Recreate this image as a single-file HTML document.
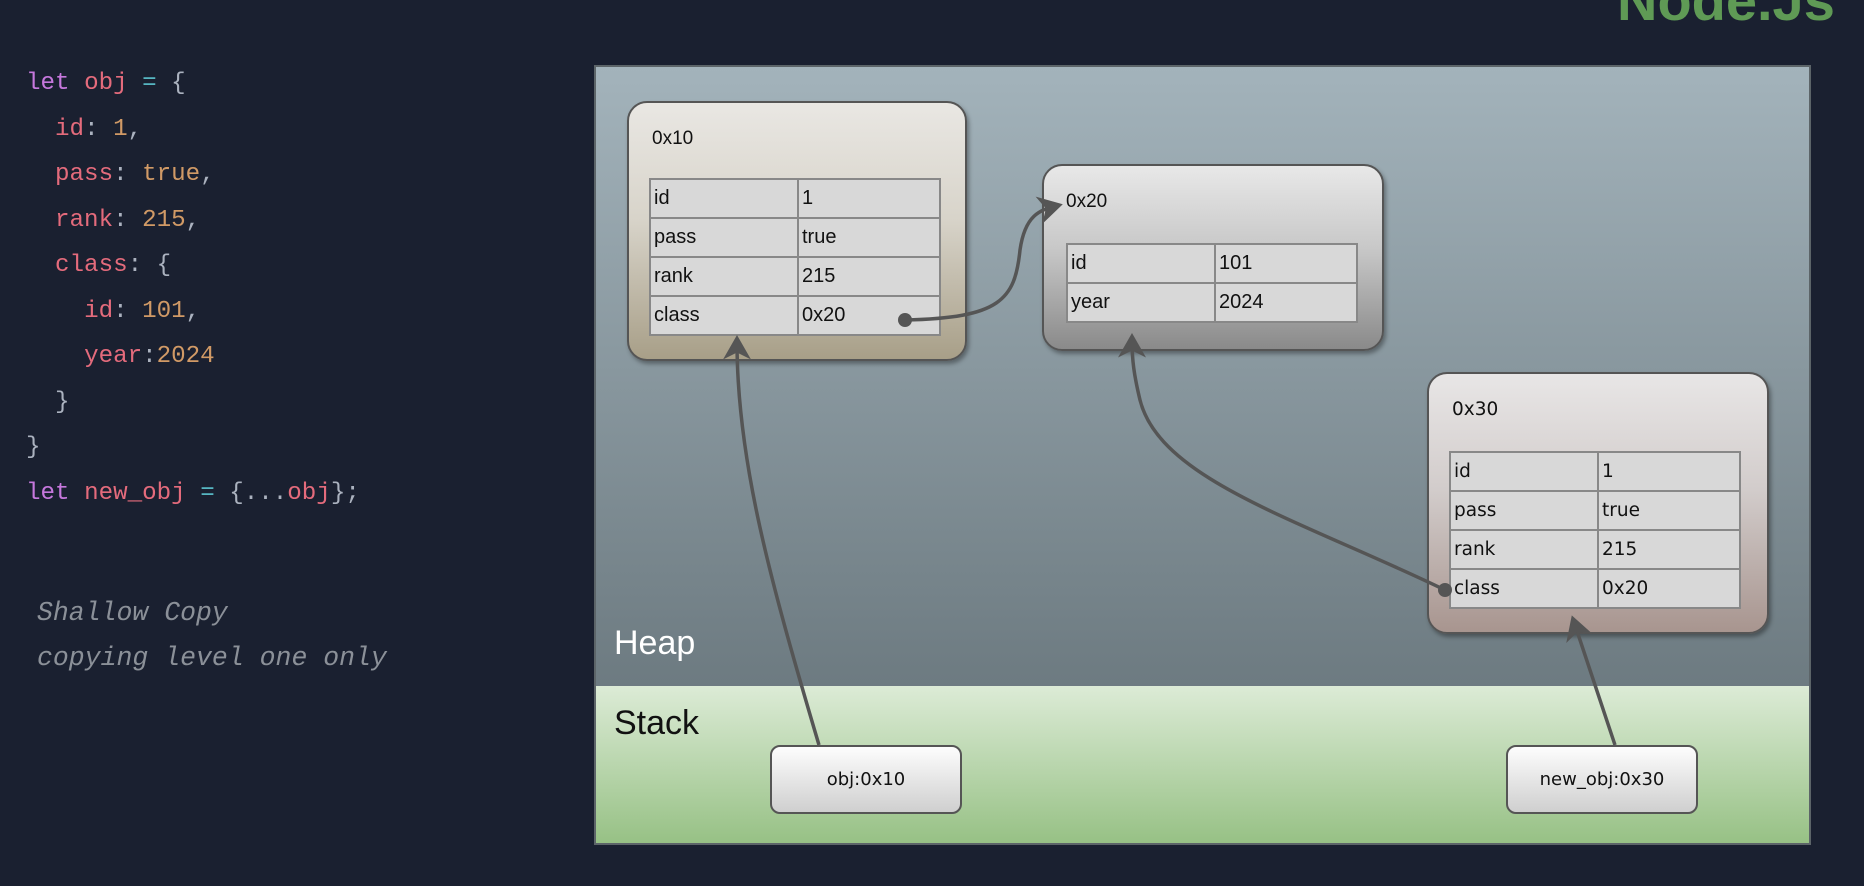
<!DOCTYPE html>
<html><head><meta charset="utf-8"><style>
html,body{margin:0;padding:0}
body{width:1864px;height:886px;background:#1a2030;position:relative;overflow:hidden;font-family:"Liberation Sans",sans-serif}
.code{position:absolute;left:26px;top:61px;font-family:"Liberation Mono",monospace;font-size:24.2px;line-height:45.5px;color:#abb2bf;white-space:pre}
.k{color:#c678dd}.v{color:#e46b7c}.o{color:#56b6c2}.n{color:#d19a66}
.cm{position:absolute;left:37px;font-family:"Liberation Mono",monospace;font-style:italic;font-size:26.5px;color:#8b9098;white-space:pre}
.logo{position:absolute;left:1617px;top:-32px;font-size:56px;font-weight:bold;color:#5f9a55;font-family:"Liberation Sans",sans-serif}
.panel{position:absolute;left:594px;top:65px;width:1213px;height:776px;border:2px solid #5c6468;background:linear-gradient(#a3b3bb,#5f6c72);}
.stack{position:absolute;left:0;top:619px;width:100%;height:157px;background:linear-gradient(#dcebd6,#97c185)}
.lbl{position:absolute;font-size:34px;color:#fff}
.box{position:absolute;border:2px solid #555;border-radius:20px;box-shadow:2px 3px 4px rgba(0,0,0,.35)}
.addr{position:absolute;font-size:19px;color:#111}
table{position:absolute;border-collapse:collapse;font-size:20px;color:#111}
td{border:2px solid #888;background:#d8d8d8;padding:0 3px;height:37px;vertical-align:middle}
.dj{font-family:"DejaVu Sans",sans-serif;font-size:18.5px}
.sb{position:absolute;top:745px;height:69px;border:2px solid #555;border-radius:10px;background:linear-gradient(#fdfdfd,#cfcfcf);font-family:"DejaVu Sans",sans-serif;font-size:18px;display:flex;align-items:center;justify-content:center;color:#111;box-sizing:border-box}
</style></head><body>
<div class="logo">Node.Js</div>
<div class="code"><span class="k">let</span> <span class="v">obj</span> <span class="o">=</span> {
  <span class="v">id</span>: <span class="n">1</span>,
  <span class="v">pass</span>: <span class="n">true</span>,
  <span class="v">rank</span>: <span class="n">215</span>,
  <span class="v">class</span>: {
    <span class="v">id</span>: <span class="n">101</span>,
    <span class="v">year</span>:<span class="n">2024</span>
  }
}
<span class="k">let</span> <span class="v">new_obj</span> <span class="o">=</span> {...<span class="v">obj</span>};</div>
<div class="cm" style="top:598px">Shallow Copy</div>
<div class="cm" style="top:643px">copying level one only</div>

<div class="panel"><div class="stack"></div>
<div class="lbl" style="left:18px;top:557px">Heap</div>
<div class="lbl" style="left:18px;top:637px;color:#111">Stack</div>
</div>

<div class="box" style="left:627px;top:101px;width:336px;height:256px;background:linear-gradient(#e9e7e3,#d8d4ca 45%,#a89f88)"></div>
<div class="addr" style="left:652px;top:128px">0x10</div>
<table style="left:649px;top:178px;width:292px"><tr><td style="width:140px">id</td><td>1</td></tr><tr><td>pass</td><td>true</td></tr><tr><td>rank</td><td>215</td></tr><tr><td>class</td><td>0x20</td></tr></table>

<div class="box" style="left:1042px;top:164px;width:338px;height:183px;background:linear-gradient(#e8e8e8,#c8c8c8 45%,#8a8a8a)"></div>
<div class="addr" style="left:1066px;top:191px">0x20</div>
<table style="left:1066px;top:243px;width:292px"><tr><td style="width:140px">id</td><td>101</td></tr><tr><td>year</td><td>2024</td></tr></table>

<div class="box" style="left:1427px;top:372px;width:338px;height:258px;background:linear-gradient(#e8e6e6,#d2cccb 45%,#a8958f)"></div>
<div class="addr dj" style="left:1452px;top:399px">0x30</div>
<table class="dj" style="left:1449px;top:451px;width:292px"><tr><td style="width:140px">id</td><td>1</td></tr><tr><td>pass</td><td>true</td></tr><tr><td>rank</td><td>215</td></tr><tr><td>class</td><td>0x20</td></tr></table>

<div class="sb" style="left:770px;width:192px">obj:0x10</div>
<div class="sb" style="left:1506px;width:192px">new_obj:0x30</div>

<svg width="1864" height="886" style="position:absolute;left:0;top:0">
<defs><marker id="a" markerWidth="8" markerHeight="8" refX="5" refY="4" orient="auto" markerUnits="strokeWidth"><path d="M0,0 L7,4 L0,8 L2,4z" fill="#555"/></marker></defs>
<g fill="none" stroke="#555" stroke-width="3.5">
<path d="M819,745 C770,580 737,460 737,342" marker-end="url(#a)"/>
<path d="M905,320 C1000,318 1015,300 1020,250 C1025,215 1040,210 1056,206" marker-end="url(#a)"/>
<path d="M1445,590 C1300,520 1160,480 1140,400 C1134,375 1132,360 1132,340" marker-end="url(#a)"/>
<path d="M1615,745 L1574,622" marker-end="url(#a)"/>
</g>
<circle cx="905" cy="320" r="7" fill="#555"/>
<circle cx="1445" cy="590" r="7" fill="#555"/>
</svg>
</body></html>
